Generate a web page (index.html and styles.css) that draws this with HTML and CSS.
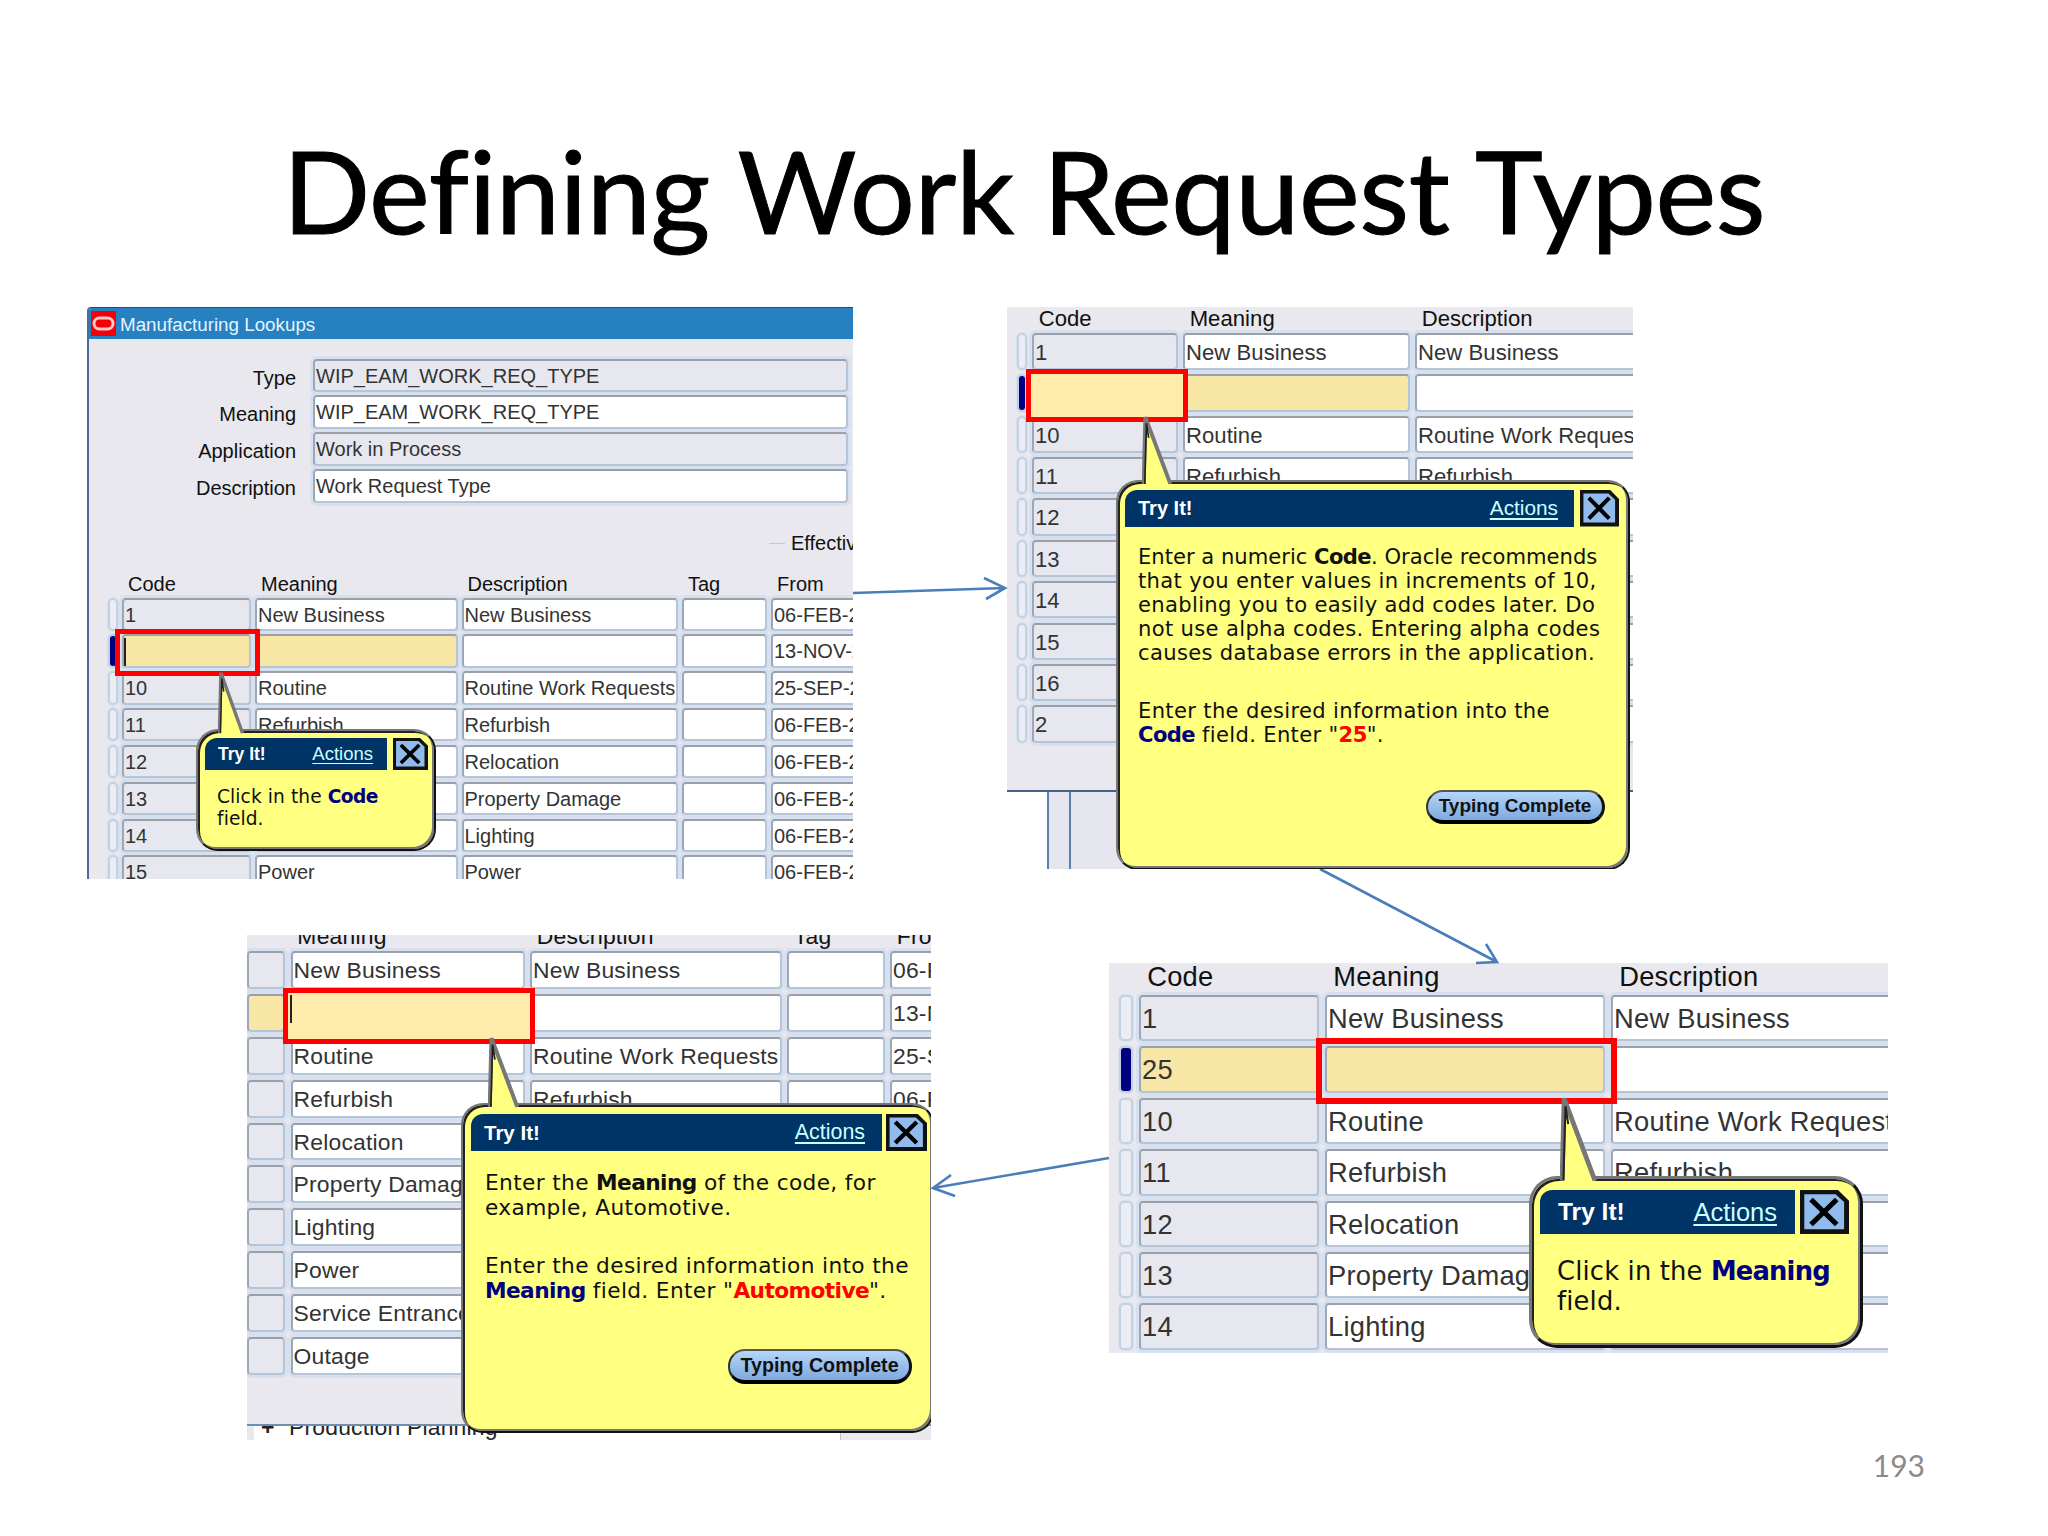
FILE: index.html
```
<!DOCTYPE html>
<html lang="en">
<head>
  <meta charset="UTF-8">
  <title>Defining Work Request Types</title>
  <link rel="stylesheet" href="styles.css">
</head>
<body>
  <main class="slide">
    <h1>Defining Work Request Types</h1>

    <!-- step 1: click in the Code field -->
    <section class="shot shot-one">
      <div class="window">
        <header class="titlebar">
          <svg class="logo" viewBox="0 0 25 25"><rect width="25" height="25" fill="#f40008"/><rect x="3" y="7" width="19" height="11" rx="5.5" fill="none" stroke="#ffc9c9" stroke-width="3"/></svg>
          <span>Manufacturing Lookups</span>
        </header>
        <div class="form">
          <label>Type</label><div class="cell gray">WIP_EAM_WORK_REQ_TYPE</div>
          <label>Meaning</label><div class="cell">WIP_EAM_WORK_REQ_TYPE</div>
          <label>Application</label><div class="cell gray">Work in Process</div>
          <label>Description</label><div class="cell">Work Request Type</div>
        </div>
        <div class="group"><i></i><span>Effective</span></div>
        <div class="heads"><span></span><span>Code</span><span>Meaning</span><span>Description</span><span>Tag</span><span>From</span></div>
        <div class="rows">
          <i class="mark"></i><div class="cell gray">1</div><div class="cell">New Business</div><div class="cell">New Business</div><div class="cell"></div><div class="cell">06-FEB-2</div>
          <i class="mark on"></i><div class="cell sel"></div><div class="cell sel"></div><div class="cell"></div><div class="cell"></div><div class="cell">13-NOV-2</div>
          <i class="mark"></i><div class="cell gray">10</div><div class="cell">Routine</div><div class="cell">Routine Work Requests</div><div class="cell"></div><div class="cell">25-SEP-2</div>
          <i class="mark"></i><div class="cell gray">11</div><div class="cell">Refurbish</div><div class="cell">Refurbish</div><div class="cell"></div><div class="cell">06-FEB-2</div>
          <i class="mark"></i><div class="cell gray">12</div><div class="cell"></div><div class="cell">Relocation</div><div class="cell"></div><div class="cell">06-FEB-2</div>
          <i class="mark"></i><div class="cell gray">13</div><div class="cell"></div><div class="cell">Property Damage</div><div class="cell"></div><div class="cell">06-FEB-2</div>
          <i class="mark"></i><div class="cell gray">14</div><div class="cell"></div><div class="cell">Lighting</div><div class="cell"></div><div class="cell">06-FEB-2</div>
          <i class="mark"></i><div class="cell gray">15</div><div class="cell">Power</div><div class="cell">Power</div><div class="cell"></div><div class="cell">06-FEB-2</div>
        </div>
      </div>
      <div class="focus"><i class="caret"></i></div>
      <div class="balloon">
        <svg class="tail" viewBox="0 0 27 68" preserveAspectRatio="none"><path d="M1.5 66 L3 2 L25.5 66 V68 H1.5z" fill="#ffff80"/><path d="M1.5 66 L3 2 L25.5 66" fill="none" stroke="#777" stroke-width="3.5"/><path d="M2.5 66 L4 8 L6 22" fill="none" stroke="#222" stroke-width="1.5"/></svg>
        <div class="bar"><div class="bar-title"><b>Try It!</b><u>Actions</u></div><svg class="close" viewBox="0 0 40 37" preserveAspectRatio="none"><path d="M0 0H31L40 9V37H0z" fill="#111"/><path d="M3.5 3.5H29L36 10V33H3.5z" fill="#8fbcec"/><path d="M9 8L30 29M30 8L9 29" stroke="#000" stroke-width="4.2"/></svg></div>
        <p>Click in the <b class="navy">Code</b><br>field.</p>
      </div>
    </section>

    <!-- step 2: type the code -->
    <section class="shot shot-two">
      <div class="window">
        <div class="heads"><span></span><span>Code</span><span>Meaning</span><span>Description</span></div>
        <div class="rows">
          <i class="mark"></i><div class="cell gray">1</div><div class="cell">New Business</div><div class="cell">New Business</div>
          <i class="mark on"></i><div class="cell sel"></div><div class="cell sel"></div><div class="cell"></div>
          <i class="mark"></i><div class="cell gray">10</div><div class="cell">Routine</div><div class="cell">Routine Work Requests</div>
          <i class="mark"></i><div class="cell gray">11</div><div class="cell">Refurbish</div><div class="cell">Refurbish</div>
          <i class="mark"></i><div class="cell gray">12</div><div class="cell"></div><div class="cell"></div>
          <i class="mark"></i><div class="cell gray">13</div><div class="cell"></div><div class="cell"></div>
          <i class="mark"></i><div class="cell gray">14</div><div class="cell"></div><div class="cell"></div>
          <i class="mark"></i><div class="cell gray">15</div><div class="cell"></div><div class="cell"></div>
          <i class="mark"></i><div class="cell gray">16</div><div class="cell"></div><div class="cell"></div>
          <i class="mark"></i><div class="cell gray">2</div><div class="cell"></div><div class="cell"></div>
        </div>
      </div>
      <div class="behind"><i></i><i></i></div>
      <div class="focus filled"></div>
      <div class="balloon">
        <svg class="tail" viewBox="0 0 27 68" preserveAspectRatio="none"><path d="M1.5 66 L3 2 L25.5 66 V68 H1.5z" fill="#ffff80"/><path d="M1.5 66 L3 2 L25.5 66" fill="none" stroke="#777" stroke-width="3.5"/><path d="M2.5 66 L4 8 L6 22" fill="none" stroke="#222" stroke-width="1.5"/></svg>
        <div class="bar"><div class="bar-title"><b>Try It!</b><u>Actions</u></div><svg class="close" viewBox="0 0 40 37" preserveAspectRatio="none"><path d="M0 0H31L40 9V37H0z" fill="#111"/><path d="M3.5 3.5H29L36 10V33H3.5z" fill="#8fbcec"/><path d="M9 8L30 29M30 8L9 29" stroke="#000" stroke-width="4.2"/></svg></div>
        <p><span class="tight">Enter a numeric <b>Code</b>. Oracle recommends</span><br>that you enter values in increments of 10,<br>enabling you to easily add codes later. Do<br>not use alpha codes. Entering alpha codes<br>causes database errors in the application.</p>
        <p>Enter the desired information into the<br><b class="navy">Code</b> field. Enter "<b class="red">25</b>".</p>
        <button>Typing Complete</button>
      </div>
    </section>

    <!-- step 3: click in the Meaning field -->
    <section class="shot shot-three">
      <div class="window">
        <div class="heads"><span></span><span>Code</span><span>Meaning</span><span>Description</span></div>
        <div class="rows">
          <i class="mark"></i><div class="cell gray">1</div><div class="cell">New Business</div><div class="cell">New Business</div>
          <i class="mark on"></i><div class="cell sel">25</div><div class="cell sel"></div><div class="cell"></div>
          <i class="mark"></i><div class="cell gray">10</div><div class="cell">Routine</div><div class="cell">Routine Work Requests</div>
          <i class="mark"></i><div class="cell gray">11</div><div class="cell">Refurbish</div><div class="cell">Refurbish</div>
          <i class="mark"></i><div class="cell gray">12</div><div class="cell">Relocation</div><div class="cell"></div>
          <i class="mark"></i><div class="cell gray">13</div><div class="cell">Property Damage</div><div class="cell"></div>
          <i class="mark"></i><div class="cell gray">14</div><div class="cell">Lighting</div><div class="cell"></div>
        </div>
      </div>
      <div class="focus"></div>
      <div class="balloon">
        <svg class="tail" viewBox="0 0 27 68" preserveAspectRatio="none"><path d="M1.5 66 L3 2 L25.5 66 V68 H1.5z" fill="#ffff80"/><path d="M1.5 66 L3 2 L25.5 66" fill="none" stroke="#777" stroke-width="3.5"/><path d="M2.5 66 L4 8 L6 22" fill="none" stroke="#222" stroke-width="1.5"/></svg>
        <div class="bar"><div class="bar-title"><b>Try It!</b><u>Actions</u></div><svg class="close" viewBox="0 0 40 37" preserveAspectRatio="none"><path d="M0 0H31L40 9V37H0z" fill="#111"/><path d="M3.5 3.5H29L36 10V33H3.5z" fill="#8fbcec"/><path d="M9 8L30 29M30 8L9 29" stroke="#000" stroke-width="4.2"/></svg></div>
        <p>Click in the <b class="navy">Meaning</b><br>field.</p>
      </div>
    </section>

    <!-- step 4: type the meaning -->
    <section class="shot shot-four">
      <div class="window">
        <div class="heads"><span></span><span>Meaning</span><span>Description</span><span>Tag</span><span>From</span></div>
        <div class="rows">
          <div class="cell gray"></div><div class="cell">New Business</div><div class="cell">New Business</div><div class="cell"></div><div class="cell">06-FEB</div>
          <div class="cell sel"></div><div class="cell sel"></div><div class="cell"></div><div class="cell"></div><div class="cell">13-NOV</div>
          <div class="cell gray"></div><div class="cell">Routine</div><div class="cell">Routine Work Requests</div><div class="cell"></div><div class="cell">25-SEP</div>
          <div class="cell gray"></div><div class="cell">Refurbish</div><div class="cell">Refurbish</div><div class="cell"></div><div class="cell">06-FEB</div>
          <div class="cell gray"></div><div class="cell">Relocation</div><div class="cell"></div><div class="cell"></div><div class="cell"></div>
          <div class="cell gray"></div><div class="cell">Property Damage</div><div class="cell"></div><div class="cell"></div><div class="cell"></div>
          <div class="cell gray"></div><div class="cell">Lighting</div><div class="cell"></div><div class="cell"></div><div class="cell"></div>
          <div class="cell gray"></div><div class="cell">Power</div><div class="cell"></div><div class="cell"></div><div class="cell"></div>
          <div class="cell gray"></div><div class="cell">Service Entrance</div><div class="cell"></div><div class="cell"></div><div class="cell"></div>
          <div class="cell gray"></div><div class="cell">Outage</div><div class="cell"></div><div class="cell"></div><div class="cell"></div>
        </div>
      </div>
      <div class="menu"><i></i><b>+</b><span>Production Planning</span><i class="pane"></i></div>
      <div class="focus filled"><i class="caret"></i></div>
      <div class="balloon">
        <svg class="tail" viewBox="0 0 27 68" preserveAspectRatio="none"><path d="M1.5 66 L3 2 L25.5 66 V68 H1.5z" fill="#ffff80"/><path d="M1.5 66 L3 2 L25.5 66" fill="none" stroke="#777" stroke-width="3.5"/><path d="M2.5 66 L4 8 L6 22" fill="none" stroke="#222" stroke-width="1.5"/></svg>
        <div class="bar"><div class="bar-title"><b>Try It!</b><u>Actions</u></div><svg class="close" viewBox="0 0 40 37" preserveAspectRatio="none"><path d="M0 0H31L40 9V37H0z" fill="#111"/><path d="M3.5 3.5H29L36 10V33H3.5z" fill="#8fbcec"/><path d="M9 8L30 29M30 8L9 29" stroke="#000" stroke-width="4.2"/></svg></div>
        <p>Enter the <b>Meaning</b> of the code, for<br>example, Automotive.</p>
        <p>Enter the desired information into the<br><b class="navy">Meaning</b> field. Enter "<b class="red">Automotive</b>".</p>
        <button>Typing Complete</button>
      </div>
    </section>

    <svg class="arrows" viewBox="0 0 2048 1536">
      <path d="M853 593L1005 588M984 578L1005 588L986 599"/>
      <path d="M1320 869L1497 962M1486 944L1497 962L1476 963"/>
      <path d="M1109 1158L933 1188M951 1175L933 1188L955 1196"/>
    </svg>

    <footer class="page-number">193</footer>
  </main>
</body>
</html>
```
FILE: styles.css
```
* {
  box-sizing: border-box;
}
body {
  margin: 0;
  background: #fff;
}
.slide {
  position: relative;
  width: 2048px;
  height: 1536px;
  overflow: hidden;
  font-family: "Liberation Sans", Arial, sans-serif;
}
h1 {
  margin: 0;
  padding-top: 114px;
  text-align: center;
  font: 400 115px/150px Lato, sans-serif;
  letter-spacing: -0.4px;
  color: #000;
  -webkit-text-stroke: 1px #000;
  white-space: nowrap;
}
.page-number {
  position: absolute;
  right: 123px;
  top: 1445px;
  font: 400 30px/40px Lato, sans-serif;
  color: #8b8b8b;
}
.arrows {
  position: absolute;
  left: 0;
  top: 0;
  width: 2048px;
  height: 1536px;
  fill: none;
  stroke: #4a7ebb;
  stroke-width: 2.6;
}

/* screenshots on the slide */
.shot {
  position: absolute;
  overflow: hidden;
  font-size: var(--fs);
  letter-spacing: var(--ls);
  white-space: nowrap;
  color: #333;
}
.window {
  background: #e8e8ee;
  overflow: hidden;
}
.heads, .rows {
  display: grid;
  grid-template-columns: var(--cols);
  column-gap: var(--gap);
  padding-left: var(--left);
}
.heads {
  position: relative;
  z-index: 1;
  height: var(--head);
  line-height: var(--head-line);
  color: #111;
}
.heads span {
  padding-left: 0.3em;
}
.rows {
  grid-auto-rows: var(--row);
  row-gap: var(--row-gap);
}
.cell {
  background: #fff;
  border: 2px solid;
  border-color: #9b9fa8 #b6c4d8 #b6c4d8 #9ca8b8;
  border-radius: 4px;
  box-shadow: 0 0 0 3px #d6e0ee;
  padding: 1px 0 0 1px;
  line-height: calc(var(--row) - 4px);
  overflow: hidden;
}
.cell.gray {
  background: #e7e8ef;
}
.cell.sel {
  background: #f7e6a6;
}
.mark {
  border: 2px solid #c2d2e2;
  border-radius: 5px;
  background: #ececf4;
  box-shadow: 0 0 0 1px #d6e0ee;
}
.mark.on {
  background: #000080;
}
.focus {
  position: absolute;
  z-index: 2;
  border: 5px solid #f00;
}
.focus.filled {
  background: #ffecac;
}
.caret {
  display: block;
  width: 2px;
  height: 28px;
  background: #222;
}

/* help balloon */
.balloon {
  position: absolute;
  z-index: 3;
  padding: 8px 8px 0 8px;
  background: #ffff80;
  border: 2px solid;
  border-color: #777 #111 #111 #777;
  border-radius: 22px;
  box-shadow: inset 2px 2px 0 #222, inset -2px -2px 0 #777;
  font-family: "DejaVu Sans", Verdana, sans-serif;
  font-size: var(--bfs);
  letter-spacing: var(--bls);
  line-height: var(--bline);
  color: #111;
}
.tail {
  position: absolute;
}
.bar {
  display: flex;
  justify-content: space-between;
  height: var(--bar);
  font-family: "Liberation Sans", Arial, sans-serif;
  letter-spacing: 0;
  line-height: var(--bar);
}
.bar-title {
  display: flex;
  justify-content: space-between;
  width: var(--bar-width);
  padding: 0 14px 0 13px;
  background: #003366;
  border-top-left-radius: 12px;
}
.bar-title b {
  color: #fff;
  font-size: var(--try);
}
.bar-title u {
  color: #ccffff;
  font-size: var(--actions);
  text-underline-offset: 3px;
}
.close {
  width: var(--close);
  height: 100%;
}
.balloon p {
  margin: 0 0 33px 13px;
}
.balloon p b {
  letter-spacing: -0.6px;
}
.balloon .tight {
  letter-spacing: 0;
}
.bar + p {
  padding-top: var(--text-top);
}
.navy {
  color: #000080;
}
.red {
  color: #f00;
}
button {
  position: absolute;
  padding: 0;
  border: 2px solid;
  border-color: #555 #111 #000 #333;
  border-bottom-width: 4px;
  border-right-width: 3px;
  border-radius: 17px;
  background: linear-gradient(#b4d6fa, #7fa8dc);
  font: bold 19px "Liberation Sans", Arial, sans-serif;
  color: #111;
}

.shot-one {
  --fs: 20px;
  --ls: 0;
  --left: 19px;
  --cols: 10px 129px 202.5px 216.5px 85px 90px;
  --gap: 4px;
  --head: 31px;
  --head-line: 35px;
  --row: 33.4px;
  --row-gap: 3.46px;
  --bfs: 18.6px;
  --bls: 0.1px;
  --bline: 21.6px;
  --bar: 32px;
  --bar-width: 182px;
  --try: 17.5px;
  --actions: 18.5px;
  --close: 35px;
  --text-top: 16px;
  left: 87px;
  top: 307px;
  width: 766px;
  height: 572px;
}
.shot-one .window {
  height: 600px;
  border-left: 2px solid #4a6c98;
  border-top: 1px solid #234c80;
  border-top-left-radius: 4px;
}
.titlebar {
  display: flex;
  align-items: center;
  gap: 4px;
  height: 31px;
  padding-left: 2px;
  background: #2780c0;
  color: #e4f4ff;
  font-size: 18.8px;
}
.titlebar span {
  padding-top: 2px;
}
.logo {
  width: 25px;
  height: 25px;
}
.form {
  display: grid;
  grid-template-columns: 207px 535px;
  grid-auto-rows: 33.4px;
  gap: 3.5px 17px;
  padding-top: 19.5px;
  color: #333;
}
.form label {
  padding-top: 1px;
  text-align: right;
  line-height: 36px;
  color: #111;
}
.group {
  display: flex;
  align-items: center;
  gap: 6px;
  height: 64px;
  padding: 17px 0 0 680px;
  color: #111;
}
.group i {
  flex: none;
  width: 16px;
  height: 1px;
  background: #bccbd4;
}
.shot-one .focus {
  left: 28px;
  top: 322px;
  width: 145px;
  height: 47px;
}
.shot-one .caret {
  margin: 4px 0 0 4px;
}
.shot-one .balloon {
  left: 109px;
  top: 422px;
  width: 240px;
  height: 122px;
  padding: 7px 6px 0 7px;
}
.shot-one .balloon p {
  margin-left: 12px;
}
.shot-one .tail {
  left: 20px;
  top: -60px;
  width: 26px;
  height: 64px;
}

.shot-two {
  --fs: 22.1px;
  --ls: 0.05px;
  --left: 10px;
  --cols: 10px 146px 227px 260px;
  --gap: 5px;
  --head: 26px;
  --head-line: 23px;
  --row: 37.3px;
  --row-gap: 4.07px;
  --bfs: 21.1px;
  --bls: 0.33px;
  --bline: 24.2px;
  --bar: 36.5px;
  --bar-width: 449px;
  --try: 20px;
  --actions: 20.8px;
  --close: 39px;
  --text-top: 18px;
  left: 1007px;
  top: 307px;
  width: 626px;
  height: 562px;
}
.shot-two .window {
  height: 485px;
  border-bottom: 2px solid #41648e;
}
.behind {
  display: flex;
  height: 80px;
  margin-left: 40px;
  width: 560px;
  background: #e6e6ef;
}
.behind i {
  width: 22px;
  border-left: 2px solid #5e80ac;
}
.shot-two .focus {
  left: 19px;
  top: 62px;
  width: 162px;
  height: 53px;
}
.shot-two .balloon {
  left: 109px;
  top: 173px;
  width: 514px;
  height: 390px;
  padding-right: 9px;
  padding-left: 7px;
}
.shot-two .bar-title {
  padding-right: 16px;
}
.shot-two .tail {
  left: 24px;
  top: -67px;
  width: 30px;
  height: 71px;
}
.shot-two button {
  right: 23px;
  top: 308px;
  width: 179px;
  height: 34px;
}

.shot-three {
  --fs: 27.3px;
  --ls: 0.25px;
  --left: 10px;
  --cols: 14px 180px 280px 340px;
  --gap: 6px;
  --head: 32px;
  --head-line: 28px;
  --row: 46.4px;
  --row-gap: 5px;
  --bfs: 25.8px;
  --bls: 0.15px;
  --bline: 29.6px;
  --bar: 44px;
  --bar-width: 255px;
  --try: 24.5px;
  --actions: 25.5px;
  --close: 49px;
  --text-top: 23px;
  left: 1109px;
  top: 963px;
  width: 779px;
  height: 390px;
}
.shot-three .window {
  height: 390px;
}
.shot-three .focus {
  left: 207px;
  top: 75px;
  width: 301px;
  height: 66px;
  border-width: 6px;
}
.shot-three .balloon {
  left: 420px;
  top: 213px;
  width: 334px;
  height: 172px;
  padding: 11px 11px 0 8px;
  border-width: 3px;
  border-radius: 28px;
}
.shot-three .bar-title {
  padding: 0 18px 0 18px;
}
.shot-three .balloon p {
  margin-left: 17px;
}
.shot-three .balloon p b {
  letter-spacing: -0.8px;
}
.shot-three .tail {
  left: 28px;
  top: -83px;
  width: 37px;
  height: 87px;
}

.shot-four {
  --fs: 22.9px;
  --ls: 0.2px;
  --left: 0px;
  --cols: 38px 234px 251.5px 97.5px 80px;
  --gap: 5.5px;
  --head: 16px;
  --head-line: 2px;
  --row: 37.9px;
  --row-gap: 5px;
  --bfs: 21.7px;
  --bls: 0.35px;
  --bline: 25px;
  --bar: 37px;
  --bar-width: 411px;
  --try: 20.5px;
  --actions: 21.4px;
  --close: 41px;
  --text-top: 19px;
  left: 247px;
  top: 935px;
  width: 684px;
  height: 505px;
}
.shot-four .window {
  height: 491px;
  border-bottom: 2px solid #6f8fae;
}
.menu {
  display: flex;
  height: 14px;
  line-height: 2px;
  overflow: hidden;
  color: #222;
}
.menu i {
  width: 7px;
  margin-right: 7px;
  background: #e8e8ee;
}
.menu b {
  width: 28px;
}
.menu .pane {
  width: 91px;
  margin: 0 0 0 auto;
  border-left: 1px solid #b8c4d8;
}
.shot-four .focus {
  left: 36px;
  top: 53px;
  width: 252px;
  height: 56px;
}
.shot-four .caret {
  margin: 2px 0 0 2px;
}
.shot-four .balloon {
  left: 214px;
  top: 168px;
  width: 473px;
  height: 330px;
  padding: 9px 5px 0 8px;
}
.shot-four .bar-title {
  padding-right: 17px;
}
.shot-four .balloon p {
  margin-left: 14px;
}
.shot-four .tail {
  left: 25px;
  top: -69px;
  width: 31px;
  height: 73px;
}
.shot-four button {
  right: 20px;
  top: 244px;
  width: 184px;
  height: 35px;
  font-size: 19.7px;
}
```
